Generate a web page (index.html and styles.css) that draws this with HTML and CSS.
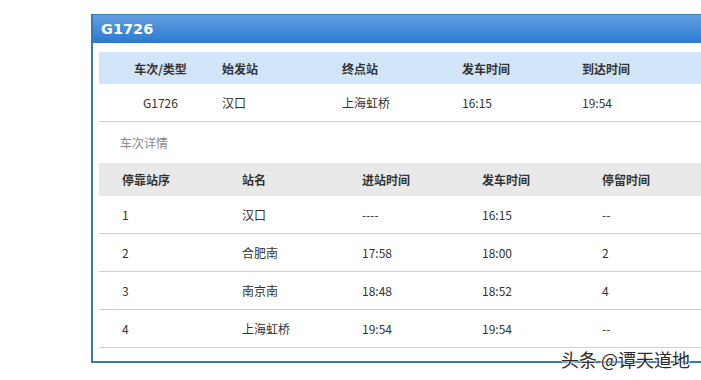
FILE: index.html
```html
<!DOCTYPE html>
<html lang="zh-CN">
<head>
<meta charset="utf-8">
<title>G1726</title>
<link rel="stylesheet" href="styles.css">
</head>
<body>
<div class="panel">
  <div class="panel-head">G1726</div>
  <div class="panel-body">
    <div class="grid summary head">
      <div class="c center">车次/类型</div>
      <div class="c">始发站</div>
      <div class="c">终点站</div>
      <div class="c">发车时间</div>
      <div class="c">到达时间</div>
    </div>
    <div class="grid summary row">
      <div class="c center">G1726</div>
      <div class="c">汉口</div>
      <div class="c">上海虹桥</div>
      <div class="c">16:15</div>
      <div class="c">19:54</div>
    </div>
    <div class="section-title">车次详情</div>
    <div class="grid stops head gray">
      <div class="c">停靠站序</div>
      <div class="c">站名</div>
      <div class="c">进站时间</div>
      <div class="c">发车时间</div>
      <div class="c">停留时间</div>
    </div>
    <div class="grid stops row">
      <div class="c">1</div><div class="c">汉口</div><div class="c">----</div><div class="c">16:15</div><div class="c">--</div>
    </div>
    <div class="grid stops row">
      <div class="c">2</div><div class="c">合肥南</div><div class="c">17:58</div><div class="c">18:00</div><div class="c">2</div>
    </div>
    <div class="grid stops row">
      <div class="c">3</div><div class="c">南京南</div><div class="c">18:48</div><div class="c">18:52</div><div class="c">4</div>
    </div>
    <div class="grid stops row">
      <div class="c">4</div><div class="c">上海虹桥</div><div class="c">19:54</div><div class="c">19:54</div><div class="c">--</div>
    </div>
  </div>
</div>
<div class="watermark">头条 @谭天道地</div>
</body>
</html>
```

FILE: styles.css
```css
html, body {
  margin: 0;
  padding: 0;
  overflow: hidden;
  background: #fff;
}
body {
  width: 701px;
  height: 380px;
  position: relative;
  font-family: "Noto Sans CJK SC", "Microsoft YaHei", sans-serif;
  font-size: 12px;
  color: #333;
}
.panel {
  margin: 14px 0 0 91px;
  width: 608px;
  border: 2px solid #3b79ac;
  border-top: 0;
  border-right: 0;
  background: #fff;
}
.panel-head {
  height: 28px;
  line-height: 28px;
  padding-left: 8px;
  background: linear-gradient(#629fe2, #2a7ad0);
  color: #fff;
  font-family: "DejaVu Sans", Verdana, sans-serif;
  font-weight: bold;
  font-size: 14.5px;
  border-top: 1px solid #3f7fc4;
}
.panel-body {
  padding: 9px 0 13px 6px;
}
.grid {
  display: grid;
  align-items: center;
}
.summary {
  grid-template-columns: 123px 120px 120px 120px 1fr;
}
.stops {
  padding-left: 23px;
  grid-template-columns: 120px 120px 120px 120px 1fr;
}
.summary.head {
  height: 32px;
  background: #d3e5f8;
}
.head .c {
  font-weight: bold;
  color: #333;
}
.gray {
  height: 33px;
  background: #e9e9e9;
}
.row {
  height: 37px;
  border-bottom: 1px solid #cfcfcf;
}
.center {
  text-align: center;
}
.section-title {
  height: 41px;
  line-height: 41px;
  padding-left: 21px;
  color: #888;
  font-size: 12px;
}
.watermark {
  position: absolute;
  left: 561px;
  top: 346px;
  font-size: 18px;
  color: #2a2a2a;
  text-shadow: 0 0 2px #fff, 0 0 2px #fff, 0 0 3px #fff;
}
```
